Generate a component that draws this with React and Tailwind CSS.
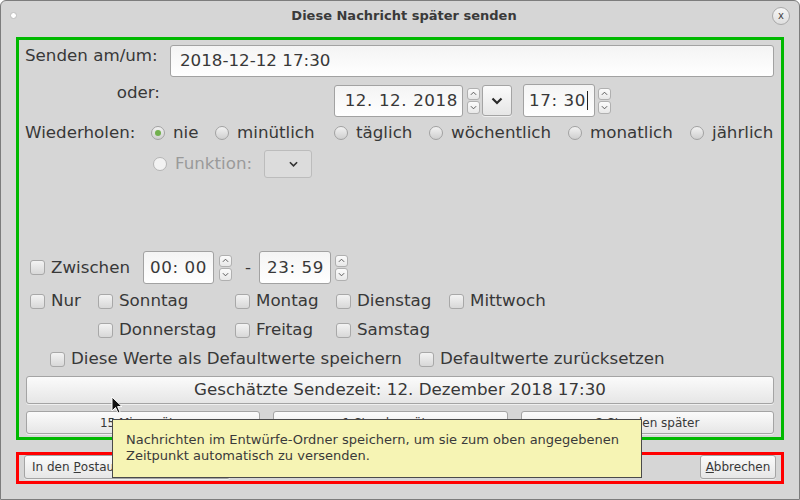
import React from "react";

const ink = "text-[#383838]";
const btn =
  "rounded-[3px] border border-[#a4a4a4] bg-gradient-to-b from-[#fbfbfb] to-[#e6e6e6] shadow-[0_1px_0_rgba(255,255,255,0.6)]";
const field =
  "rounded-[3px] border border-[#a2a2a2] bg-gradient-to-b from-[#f4f4f4] to-[#ffffff]";

function Chevron({ up, className = "" }) {
  return (
    <svg viewBox="0 0 8 5" className={className}>
      <path
        d={up ? "M1 4 L4 1 L7 4" : "M1 1 L4 4 L7 1"}
        fill="none"
        stroke="#555"
        strokeWidth="1.1"
      />
    </svg>
  );
}

function Spin() {
  return (
    <div className="flex h-[26px] w-[13px] flex-col gap-[1px]">
      {[true, false].map((up) => (
        <div
          key={String(up)}
          className="flex flex-1 items-center justify-center rounded-[3px] border border-[#b0b0b0] bg-gradient-to-b from-[#fbfbfb] to-[#e8e8e8]"
        >
          <Chevron up={up} className="h-[5px] w-[7px]" />
        </div>
      ))}
    </div>
  );
}

function Radio({ checked, disabled }) {
  return (
    <span
      className={
        "flex h-[14px] w-[14px] shrink-0 items-center justify-center rounded-full border " +
        (disabled
          ? "border-[#b4b4b4] bg-[#f2f2f2]"
          : "border-[#a2a2a2] bg-gradient-to-b from-[#f2f2f2] to-[#cfcfcf]")
      }
    >
      {checked && <span className="h-[6px] w-[6px] rounded-full bg-[#72b04e]" />}
    </span>
  );
}

function Check() {
  return (
    <span className="h-[15px] w-[15px] shrink-0 rounded-[3px] border border-[#a8a8a8] bg-gradient-to-b from-[#f3f3f3] to-[#d8d8d8]" />
  );
}

function TimeBox({ value, w, cursor }) {
  return (
    <div
      className={`${field} flex h-[33px] items-center justify-end pr-[6px] text-[16.7px] ${ink}`}
      style={{ width: w }}
    >
      <span className="tracking-[0.6px]">{value}</span>
      {cursor && <span className="ml-[1px] h-[19px] w-px bg-[#222]" />}
    </div>
  );
}

const repeat = [
  ["nie", 64, true],
  ["minütlich", 119],
  ["täglich", 95],
  ["wöchentlich", 139],
  ["monatlich", 122],
  ["jährlich", 84],
];

export default function App() {
  return (
    <div
      className={`relative h-[500px] w-[800px] overflow-hidden rounded-t-[6px] border border-[#7d7d7d] bg-[#d6d6d6] ${ink}`}
      style={{ fontFamily: '"DejaVu Sans", Verdana, sans-serif' }}
    >
      {/* title bar */}
      <div className="grid h-[29px] grid-cols-[1fr_auto_1fr] items-center px-[9px]">
        <span className="h-[7px] w-[7px] rounded-full border border-[#bdbdbd] bg-white" />
        <span className="pl-[8px] text-[13px] font-bold text-[#3a3a3a]">
          Diese Nachricht später senden
        </span>
        <span className="flex h-[18px] w-[18px] items-center justify-center justify-self-end rounded-full border border-[#a9a9a9] bg-gradient-to-b from-[#f6f6f6] to-[#dedede] text-[10px] leading-none text-[#444]">
          x
        </span>
      </div>

      {/* green frame */}
      <div className="ml-[15px] mt-[7px] flex h-[403px] w-[768px] flex-col border-[3px] border-[#00b900] pl-[6px] pr-[7px] text-[16.7px]">
        <div className="mt-[5px] flex h-[32px] items-start">
          <span className="w-[145px] leading-[20px]">Senden am/um:</span>
          <div className={`${field} flex h-[32px] flex-1 items-center pl-[9px]`}>
            2018-12-12 17:30
          </div>
        </div>

        <div className="mt-[7px] flex h-[32px] items-start">
          <span className="-mt-[2px] w-[145px] pr-[10px] text-right leading-[20px]">oder:</span>
          <div className="ml-[164px] flex items-center">
            <div
              className={`${field} flex h-[32px] w-[129px] items-center justify-end pr-[4px] tracking-[0.6px]`}
            >
              12. 12. 2018
            </div>
            <div className="ml-[4px]">
              <Spin />
            </div>
            <div className={`${btn} ml-[2px] flex h-[31px] w-[30px] items-center justify-center`}>
              <svg viewBox="0 0 12 8" className="h-[8px] w-[12px]">
                <path d="M1.5 1.5 L6 6 L10.5 1.5" fill="none" stroke="#2a2a2a" strokeWidth="2.2" />
              </svg>
            </div>
            <div className="ml-[11px]">
              <TimeBox value="17: 30" w={72} cursor />
            </div>
            <div className="ml-[3px]">
              <Spin />
            </div>
          </div>
        </div>

        <div className="mt-[5px] flex h-[24px] items-center">
          <span className="w-[128px]">Wiederholen:</span>
          {repeat.map(([label, w, checked]) => (
            <label
              key={label}
              className="flex shrink-0 items-center gap-[8px]"
              style={{ width: w }}
            >
              <Radio checked={checked} />
              {label}
            </label>
          ))}
        </div>

        <div className="mt-[5px] flex h-[28px] items-center pl-[128px]">
          <label className="flex w-[111px] items-center gap-[8px] text-[#9a9a9a]">
            <Radio disabled />
            Funktion:
          </label>
          <div className="flex h-[28px] w-[48px] items-center justify-end rounded-[3px] border border-[#bcbcbc] bg-[#dcdcdc] pr-[13px]">
            <svg viewBox="0 0 10 6" className="h-[6px] w-[9px]">
              <path d="M1 1 L5 5 L9 1" fill="none" stroke="#333" strokeWidth="1.8" />
            </svg>
          </div>
        </div>

        <div className="mt-[73px] flex h-[33px] items-center pl-[5px]">
          <Check />
          <span className="ml-[6px] w-[92px]">Zwischen</span>
          <TimeBox value="00: 00" w={71} />
          <div className="ml-[5px]">
            <Spin />
          </div>
          <span className="ml-[13px] w-[14px]">-</span>
          <TimeBox value="23: 59" w={72} />
          <div className="ml-[4px]">
            <Spin />
          </div>
        </div>

        <div className="mt-[5px] flex h-[24px] items-center pl-[5px]">
          <span className="flex w-[68px] items-center gap-[6px]">
            <Check />
            Nur
          </span>
          <span className="flex w-[137px] items-center gap-[6px]">
            <Check />
            Sonntag
          </span>
          <span className="flex w-[101px] items-center gap-[6px]">
            <Check />
            Montag
          </span>
          <span className="flex w-[113px] items-center gap-[6px]">
            <Check />
            Dienstag
          </span>
          <span className="flex items-center gap-[6px]">
            <Check />
            Mittwoch
          </span>
        </div>

        <div className="mt-[5px] flex h-[24px] items-center pl-[73px]">
          <span className="flex w-[137px] items-center gap-[6px]">
            <Check />
            Donnerstag
          </span>
          <span className="flex w-[101px] items-center gap-[6px]">
            <Check />
            Freitag
          </span>
          <span className="flex items-center gap-[6px]">
            <Check />
            Samstag
          </span>
        </div>

        <div className="mt-[5px] flex h-[24px] items-center pl-[25px]">
          <span className="flex w-[369px] items-center gap-[6px]">
            <Check />
            Diese Werte als Defaultwerte speichern
          </span>
          <span className="flex items-center gap-[6px]">
            <Check />
            Defaultwerte zurücksetzen
          </span>
        </div>

        <div className={`${btn} ml-[1px] mt-[5px] flex h-[28px] items-center justify-center`}>
          Geschätzte Sendezeit: 12. Dezember 2018 17:30
        </div>

        <div className="ml-[1px] mt-[7px] grid h-[23px] grid-cols-[234px_235px_1fr] gap-[13px] text-[12px]">
          <div className={`${btn} flex items-center justify-center`}>15 Min. später</div>
          <div className={`${btn} flex items-center justify-center`}>1 Stunde später</div>
          <div className={`${btn} flex items-center justify-center`}>2 Stunden später</div>
        </div>
      </div>

      {/* red frame */}
      <div className="ml-[15px] mt-[12px] flex h-[32px] w-[768px] items-start justify-between border-[3px] border-[#ff0000] pl-[5px] pr-[5px]">
        <div className={`${btn} flex h-[24px] w-[206px] items-center pl-[7px] text-[12px]`}>
          In den{" "}
          <span className="ml-[4px] underline">P</span>ostausgang stellen
        </div>
        <div className={`${btn} flex h-[24px] w-[76px] items-center justify-center text-[12px]`}>
          <span className="underline">A</span>bbrechen
        </div>
      </div>

      {/* tooltip */}
      <div className="absolute left-[111px] top-[418px] h-[59px] w-[530px] border border-[#4a4a4a] bg-[#f6f4b4] pl-[13px] pt-[12px] text-[13px] leading-[16px] text-[#3a3a3a]">
        <div>Nachrichten im Entwürfe-Ordner speichern, um sie zum oben angegebenen</div>
        <div>Zeitpunkt automatisch zu versenden.</div>
      </div>

      {/* mouse cursor */}
      <svg viewBox="0 0 12 19" className="absolute left-[110px] top-[395px] h-[19px] w-[12px]">
        <path
          d="M1 1 L1 15 L4.5 11.5 L7 17 L9 16 L6.6 10.6 L11 10.6 Z"
          fill="#111"
          stroke="#fff"
          strokeWidth="1"
          strokeLinejoin="round"
        />
      </svg>
    </div>
  );
}
